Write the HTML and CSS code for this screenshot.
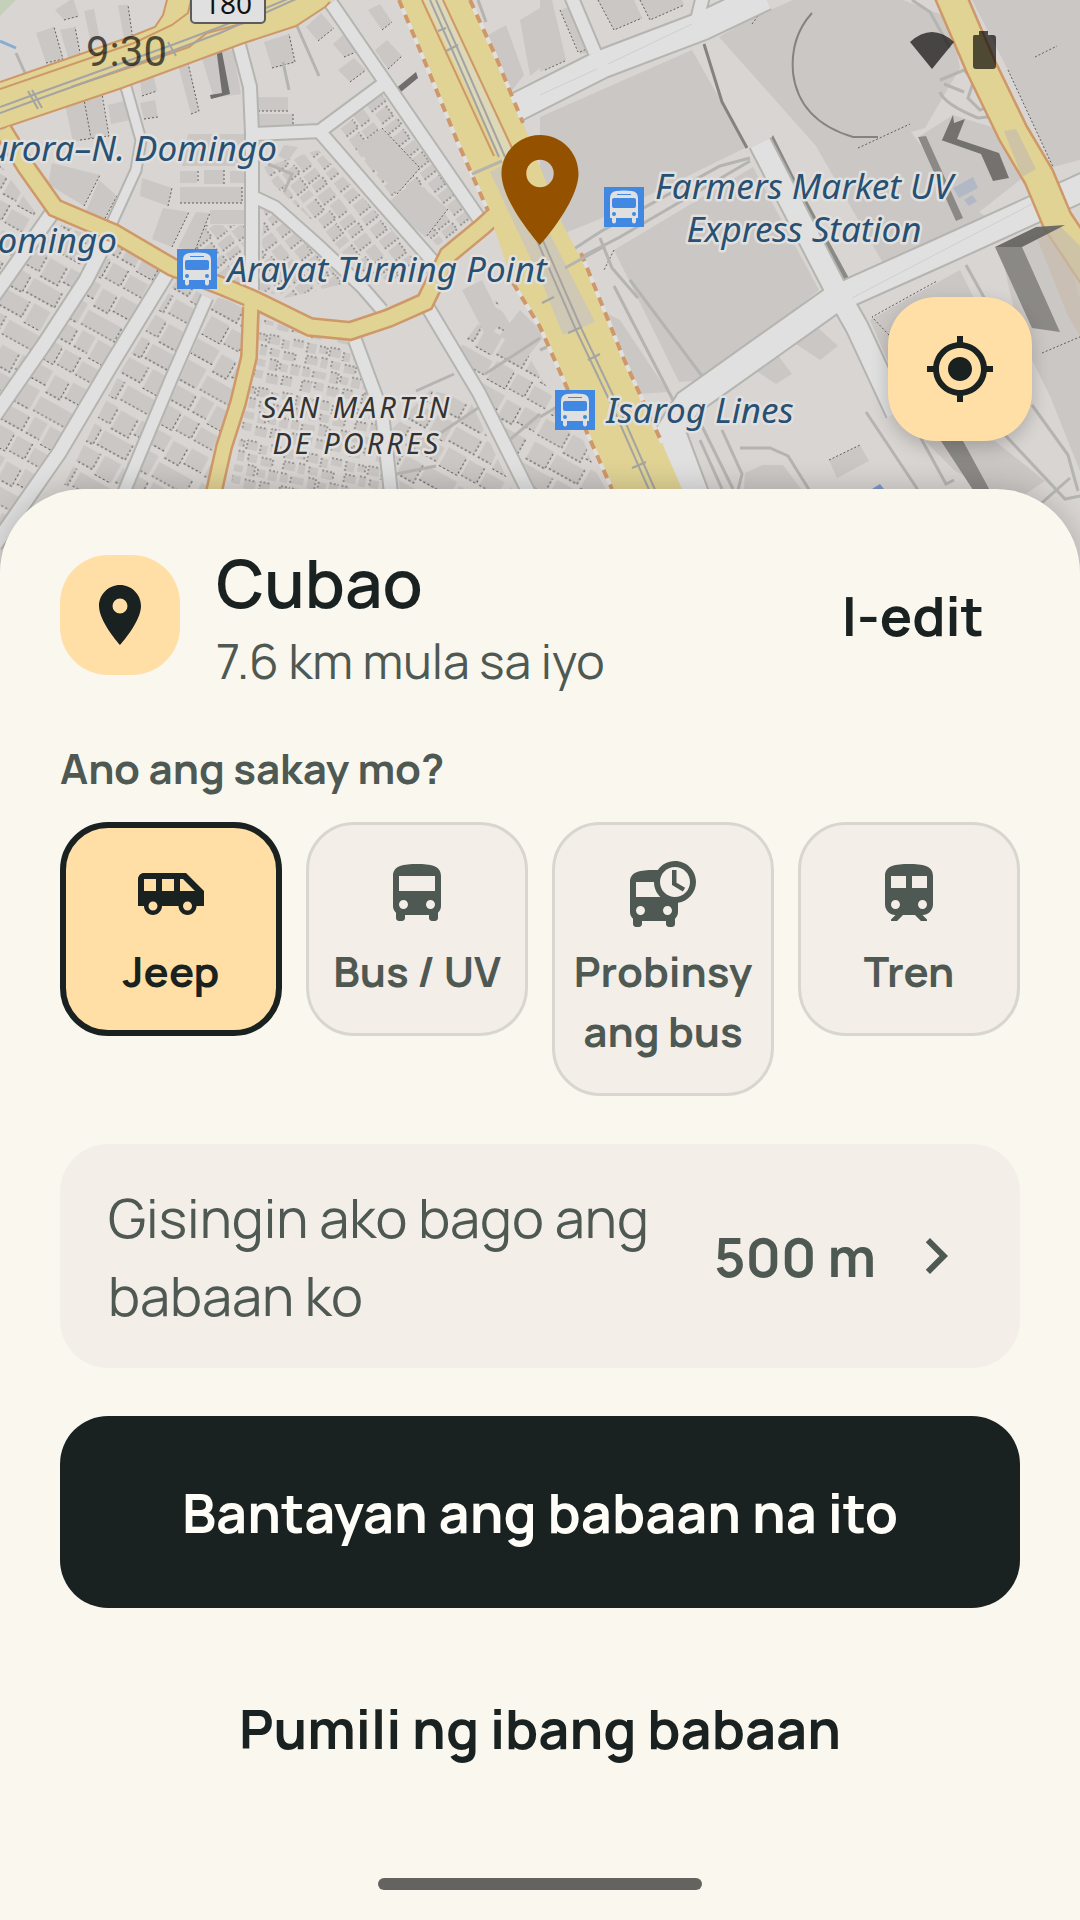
FILE: index.html
```html
<!DOCTYPE html>
<html lang="fil">
<head>
    <meta charset="UTF-8">
    <meta name="viewport" content="width=device-width, initial-scale=1.0">
    <title>Cubao</title>
    <link rel="stylesheet" href="styles.css">
</head>
<body>
    <div class="map">
        <svg class="map-canvas" viewBox="0 0 1080 573" preserveAspectRatio="xMidYMin slice" role="img" aria-label="Mapa ng Cubao">
            <defs>
                <!-- Rows of small houses -->
                <pattern id="houses" width="118" height="86" patternUnits="userSpaceOnUse" patternTransform="rotate(29) scale(1.15)">
                    <path class="house" d="M2 2h24v16H2zM29 3h17v18H29zM49 2h30v14H49zM82 4h14v17H82zM99 2h17v15H99zM3 24h19v17H3zM25 25h28v14H25zM57 22h20v19H57zM80 26h33v14H80zM2 45h30v15H2zM36 44h16v19H36zM55 46h25v14H55zM84 44h13v16H84zM100 45h16v18h-16zM4 66h16v17H4zM24 67h31v14H24zM58 65h18v18H58zM79 66h15v15H79zM97 68h18v13H97z"/>
                    <path class="house-edge" d="M2 18h24V2M29 21h17V3M49 16h30M82 21h14V4M99 17h17M3 41h19V24M25 39h28V25M57 41h20M80 40h33V26M2 60h30V45M36 63h16M55 60h25V46M84 60h13M100 63h16V45M4 83h16V66M24 81h31M58 83h18V65M79 81h15V66M97 81h18"/>
                </pattern>
                <pattern id="lots" width="74" height="58" patternUnits="userSpaceOnUse" patternTransform="rotate(-38)">
                    <path class="house" d="M2 2h14v11H2zM19 2h18v13H19zM40 3h12v14H40zM55 2h16v11H55zM2 17h19v10H2zM24 19h13v13H24zM41 21h15v10H41zM59 17h12v15H59zM3 31h14v12H3zM21 36h16v9H21zM40 35h13v12H40zM56 36h15v9H56zM2 47h16v8H2zM21 49h15v7H21zM40 50h13v7H40zM57 48h14v8H57z"/>
                    <path class="house-edge" d="M2 13h14V2M19 15h18M40 17h12V3M55 13h16M2 27h19V17M24 32h13M41 31h15V21M59 32h12M3 43h14V31M21 45h16M40 47h13V35M56 45h15M2 55h16V47M21 56h15M57 56h14V48"/>
                </pattern>
                <pattern id="shanties" width="62" height="54" patternUnits="userSpaceOnUse" patternTransform="rotate(12)">
                    <path class="house" d="M1 1h9v10H1zM13 2h8v7h-8zM24 1h11v9H24zM38 3h7v9h-7zM48 1h11v7H48zM2 14h12v8H2zM17 13h7v10h-7zM28 14h9v8h-9zM41 15h12v8H41zM1 26h8v9H1zM12 27h13v7H12zM29 25h8v11h-8zM40 27h8v8h-8zM51 26h9v10h-9zM3 39h10v11H3zM16 38h9v8h-9zM29 40h12v9H29zM45 39h10v9H45z"/>
                    <path class="house-edge" d="M1 1v10M13 2h8v7M24 10V1h11M38 3v9M48 1h11M2 22v-8h12M17 13h7M28 14v8M41 15h12v8M1 26h8M12 34v-7M29 25h8v11M40 27v8M51 26h9M3 50V39h10M16 38v8M29 40h12M45 48v-9h10"/>
                </pattern>
                <symbol id="bus-stop" viewBox="0 0 40 40">
                    <path fill="#4088e2" d="M0 0h40v40H0z"/>
                    <path fill="#e0e0e0" d="M6 11q0-6 6-7 8-1 16 0 6 1 6 7v20h-2v4q-2 3-4 0v-4H12v4q-2 3-4 0v-4H6z"/>
                    <rect fill="#4088e2" x="8" y="11" width="24" height="10" rx="2"/>
                    <path fill="#4088e2" d="M13 7h14v1H13z"/>
                    <circle fill="#4088e2" cx="10" cy="27" r="2"/>
                    <circle fill="#4088e2" cx="30" cy="27" r="2"/>
                </symbol>
            </defs>

            <rect class="land" width="1080" height="573"/>
            <path fill="#c5d0ba" d="M0 0h16L0 16z"/>
            <path fill="none" stroke="#86add0" stroke-width="3" d="M0 41l16 7"/>

            <!-- Dense blocks -->
            <path fill="url(#houses)" d="M0 165l45 60-45 62zM62 225l48 18-70 100-40 50V290zM116 240l54 26-60 104-75 130-35 50V420l60-90zM178 278l26 18-35 80-45 113H62l60-120zM216 297l34 10v50l-30 132H132l52-120z"/>
            <path fill="url(#houses)" d="M496 300l110 189h-70l-50-95-26-46zM430 390l40 10 42 89H400l-8-60zM568 400l34 89h-50l-20-60z"/>
            <path fill="url(#lots)" d="M318 150l70 75 40 48-62 10-40-50-52-48-10-18zM338 125l44-30 90 125-30 30-50-50zM264 205l40 38 42 40-60 15-26-8zM190 225h54v65l-30-10-30-14z"/>
            <path fill="url(#shanties)" d="M262 318l50 18 40 5 28 90 5 58H230l15-80z"/>

            <!-- Single buildings -->
            <path class="house" d="M55 10l18-12 6 18-15 4zM84 11l10-2 6 31-9 3zM36 33l18-6 9 32-17 4zM60 30l15-3 7 36-11 4zM118 5h10l5 35-8 4zM65 104l36-10 8 42-36 6zM108 105l20-5 2 20-19 4zM200 52l33-2 8 44-27 4zM178 65l10-2 11 48-8 3zM264 42l25-8 6 28-23 6zM306 27l15-14 13 15-16 13zM333 44l18-16 15 20-22 9zM368 10l12-6 12 18-10 8zM375 50l12-10 15 16-14 13zM338 70l16-12 12 12-16 12zM140 80l14-3 3 14-15 5zM140 103l15-3 3 17-14 2zM52 163l48 12-16 31-36-22zM99 180l18 16-14 26-18-8zM142 178l30 10-4 18-28-10zM188 134h62v32h-68zM180 171h17v12h-17zM204 170h20v14h-20zM230 171h18v12h-18zM180 187h62v16h-62zM163 208l26 4-17 35-20-8zM196 212l14 1-16 40-16-6zM210 210h34v14h-34zM258 97h30v14h-30zM259 114h34v14h-34zM284 145l14 2-10 14-10-5zM356 148l26-20 38 40-23 26zM385 205l30-24 33 28-22 28z"/>
            <path class="house-edge" d="M64 20l15-4M46 63l17-4-9-32M71 67l11-4-7-36M133 40l-5-35M142 96l15-5M144 119l14-2M80 140l29-4-7-42M83 94l8 44M191 114l8-3-11-48M272 68l23-6-6-28M318 41l16-13M344 57l22-9M382 30l10-8M388 69l14-13M350 82l16-12M84 206l16-31M103 222l14-26M168 206l4-18M198 171v12M224 170v14M248 171v12M180 203h62v-16M172 247l17-35M194 253l16-40M258 111h30M293 114v14M382 128l38 40-23 26M448 209l-22 28"/>
            <path fill="#6f6e6c" d="M216 47l6 5 8 42-19 5-1-4 12-2zM394 90l22-18 2 6-22 18z"/>

            <path class="house" d="M488 35l18-10 18 50-14 18zM520 20l20-12v60l-10 8zM540 0h12l14 60-26 12zM560 10l18-6 18 48-16 2zM598 0h36l8 18-28 12zM640 0h42l2 5-34 15zM540 117l152-67 30 53 25 44-147 72-60 24zM719 37l30-18 44-19h110l47 18 10 50-35 60-14 4 52 70 38 24-105 60-80-140zM920 136l33-21 80 25 2 28-66 52zM972 0h108v160l-27 7-45-97zM614 250l139-83 66 123-110 90-30 2zM600 310l20 10 48 72-30 2zM790 340l24-16 24 22-18 14zM752 368l22-18 18 24-16 10zM870 320l90-50 30 60-90 60zM1000 248l60-22 40 150-10 120-40-100-30-60zM745 473l18-8h20l30 40h-70zM829 460l31-15 9 16-32 17zM462 290l20-10 20 40-14 20zM500 335l20-25 25 25-20 25z"/>
            <path class="house" d="M925 441h70l50 40-30 20-60-30z"/>
            <circle class="house" cx="866" cy="68" r="72"/>
            <path fill="none" stroke="#858380" stroke-width="3" d="M704 44l18 58 25 46"/>
            <path fill="none" stroke="#858380" stroke-width="2" d="M812 13q-22 24-19 60 6 48 60 64h25"/>
            <path class="road-edge" stroke-dasharray="2 3" d="M858 148l52-24M752 24l12-16M614 250l-10 20M1035 57l22-11M580 52l18-8M545 70l20-9M560 10l18 42M598 0l16 30 28-12M640 0l10 20 34-15M922 370l-50-53 65-36M1042 353l40-17M829 460l31-15M1008 70l45 97"/>
            <path fill="#8a8986" d="M773 135l20 40 58 107-6 4-58-100-18-44zM918 137l8-1 37 82-7 3zM756 0h8l4 6-6 2z"/>
            <path fill="#73726f" d="M942 140l11-25 1 8 11-4-8 20 42 14 10 25-16 3-12-27-40-14z"/>
            <path fill="#b3b8c6" d="M953 188l20-11 5 11-19 10zM964 200l8-5 5 6-8 5z"/>
            <path fill="#8a8986" d="M995 247l27 0 38 85-28-4zM941 441h22l30 55h-16z"/>
            <path fill="#7f97cf" d="M872 489l8-5 4 5z"/>

            <!-- Footways and service lanes -->
            <path class="lane" d="M630 280l75 100 12 6M614 286l60 116M560 268l60-31 130-76M600 238l12 30 26 30M560 258l40-26 120-66 30-8M667 430l50-38 80-52 52-36M695 489l-28-55 28-22 38 77M700 440l22 49M722 430l20 44-10 40M740 448h30l18 8 30 48M866 412l60 90M900 400l46 84 8-4M1005 435l60 64 30-6M1032 405l36 50 10 36M1070 478l-34 30M940 80l24-10 10 10-6 18 12 12 16-6-20-36M964 92l-20-8M940 92q4 12 38 26l20-2M912 0l18 12 20 36M966 265l20 36M283 62l6 28M297 26l22 50M478 0l8 22M16 53l9 20M268 164l24 10-8 18M416 391l38-17M430 440l48-32M396 474l40-8M485 374l55-36M500 448l40-34M540 350l14-6M540 417l20-12"/>

            <!-- Minor streets -->
            <g class="street-case">
                <path d="M239 45l11 42 2 46v157" stroke-width="16"/>
                <path d="M126 87l15 53-5 30-26 57" stroke-width="13"/>
                <path d="M252 134l68-3 62-46" stroke-width="16"/>
                <path d="M331 3l48 70 48 70 55 80" stroke-width="16"/>
                <path d="M320 132l59 68 58 66" stroke-width="16"/>
                <path d="M254 197l21 10 45 40 42 40 20 23" stroke-width="15"/>
                <path d="M52 213L7 277l-20 28M110 233l-24 47-41 63-50 72M169 270l-55 90-55 93-64 92" stroke-width="17"/>
                <path d="M207 297l-35 80-48 115" stroke-width="15"/>
                <path d="M355 340l27 73 9 80M427 306l52 87 50 100" stroke-width="16"/>
                <path d="M515 108l87-44 100-38L765-4" stroke-width="31"/>
                <path d="M595 53L571-4M697 20l6-24" stroke-width="16"/>
                <path d="M760 143l76 147 21 37 40 86" stroke-width="25"/>
                <path d="M1090 184L936 254l-103 46-145 103-17 27 24 64" stroke-width="30"/>
            </g>
            <g class="street">
                <path d="M239 45l11 42 2 46v157" stroke-width="12"/>
                <path d="M126 87l15 53-5 30-26 57" stroke-width="9"/>
                <path d="M252 134l68-3 62-46" stroke-width="12"/>
                <path d="M331 3l48 70 48 70 55 80" stroke-width="12"/>
                <path d="M320 132l59 68 58 66" stroke-width="12"/>
                <path d="M254 197l21 10 45 40 42 40 20 23" stroke-width="11"/>
                <path d="M52 213L7 277l-20 28M110 233l-24 47-41 63-50 72M169 270l-55 90-55 93-64 92" stroke-width="13"/>
                <path d="M207 297l-35 80-48 115" stroke-width="11"/>
                <path d="M355 340l27 73 9 80M427 306l52 87 50 100" stroke-width="12"/>
                <path d="M515 108l87-44 100-38L765-4" stroke-width="27"/>
                <path d="M595 53L571-4M697 20l6-24" stroke-width="12"/>
                <path d="M760 143l76 147 21 37 40 86" stroke-width="21"/>
                <path d="M1090 184L936 254l-103 46-145 103-17 27 24 64" stroke-width="26"/>
            </g>
            <path fill="none" stroke="#cfcfcf" d="M608 64l84-40M540 95l57-26M852 298l180-94"/>

            <!-- Main roads -->
            <g class="main-case">
                <path d="M3 130l23 37 29 41 59 25 58 34 52 20 31 13 55 27 40 4 39-13 36-16 23-47 34-28 20-18" stroke-width="20"/>
                <path d="M251 307l-2 50-11 46-14 44-18 80" stroke-width="18"/>
                <path d="M948-10l33 77 32 66 26 44 18 43 40 60" stroke-width="33"/>
            </g>
            <path class="main-fill" d="M0 82l127-44 28-11 8-12 4-15h165l-7 7-29 19-52 17-122 45L0 129z"/>
            <path class="main-line" d="M0 82l127-44 28-11 8-12 4-15M0 89l134-46 38-18 16-12 3-13M71 87l60-20 58-20 18-14 45-12M330 2l-5 5-29 19-52 17-122 45L0 129"/>
            <path class="main-fill" d="M399 0h71l26 57 27 66 39 100 30 57 31 77 39 86 20 46h-70l-44-99-31-73-24-34-24-70-31-70-31-76z"/>
            <path class="main-line dash-back" d="M399 0l28 67 31 76 31 70M513 283l27 44 28 63 44 99M470 0l26 57 27 66M581 253l11 27 31 77 39 86"/>
            <path class="main-line dashed" d="M399 0l28 67 31 76 31 70M513 283l27 44 28 63 44 99M470 0l26 57 27 66M581 253l11 27 31 77 39 86"/>
            <g class="main">
                <path d="M3 130l23 37 29 41 59 25 58 34 52 20 31 13 55 27 40 4 39-13 36-16 23-47 34-28 20-18" stroke-width="15"/>
                <path d="M251 300l-2 57-11 46-14 44-18 80" stroke-width="13"/>
                <path d="M948-10l33 77 32 66 26 44 18 43 40 60" stroke-width="28"/>
            </g>
            <path fill="#ddd8b8" d="M424 0h18l66 143 14 30h-14z"/>
            <path class="main-line" d="M422 0l72 156M443 0l70 150"/>
            <path fill="#cdc6b8" d="M490 172l22-12 83 162-32 13-20-50z" opacity=".9"/>
            <path class="rail" d="M0 107l33-12 139-50 48-18L290-2M0 113l33-12 139-50 48-18L296-1M430 0l20 45 49 112M436 0l20 45 49 112M528 220l48 110 38 80 36 82M534 220l48 110 38 80 36 82M28 91l10 18M32 90l10 18M168 42l8 14M446 28l-8 3M458 45l-12 6M588 360l12-6M632 468l14-6M542 303l12-6M568 333l14-6"/>
            <path class="lane" d="M472 174l30-13M565 268l40-22"/>
            <path fill="#c8bcae" opacity=".7" d="M1004 131l12-2 20 40-14 8zM1036 236l24-10 20 20v90l-12-20z"/>
            <path fill="#62605d" opacity=".9" d="M995 247l41-20 29-2-43 22z"/>

            <rect x="191" y="-20" width="74" height="43" rx="4" fill="#e0e0e0" stroke="#5c5c5c" stroke-width="2"/>
            <text class="route" x="228" y="14">180</text>

            <use href="#bus-stop" x="177" y="249" width="40" height="40"/>
            <use href="#bus-stop" x="604" y="187" width="40" height="40"/>
            <use href="#bus-stop" x="555" y="390" width="40" height="40"/>
            <g class="stop-name">
                <text x="277" y="161" text-anchor="end">Aurora–N. Domingo</text>
                <text x="117" y="253" text-anchor="end">Domingo</text>
                <text x="387" y="282" text-anchor="middle">Arayat Turning Point</text>
                <text x="804" y="199" text-anchor="middle">Farmers Market UV</text>
                <text x="804" y="242" text-anchor="middle">Express Station</text>
                <text x="700" y="423" text-anchor="middle">Isarog Lines</text>
            </g>
            <g class="district">
                <text x="357" y="418">SAN MARTIN</text>
                <text x="357" y="454">DE PORRES</text>
            </g>

            <path fill="#945200" transform="translate(474 124) scale(5.5)" d="M12 2C8.13 2 5 5.13 5 9c0 5.25 7 13 7 13s7-7.75 7-13c0-3.87-3.13-7-7-7zm0 9.500a2.500 2.500 0 0 1 0-5 2.500 2.500 0 0 1 0 5z"/>
        </svg>

        <div class="status-bar">
            <span>9:30</span>
            <svg width="88" height="42" viewBox="0 0 88 42" aria-hidden="true">
                <path d="M0 11Q22-9 44 11L22 38zM64 4h5V0h9v4h5q3 0 3 3v28q0 3-3 3H66q-3 0-3-3V7q0-3 1-3z"/>
            </svg>
        </div>

        <button class="locate" type="button" aria-label="Kasalukuyang lokasyon">
            <svg class="icon" viewBox="0 0 24 24"><path d="M12 8c-2.210 0-4 1.790-4 4s1.790 4 4 4 4-1.790 4-4-1.790-4-4-4zm8.940 3A8.994 8.994 0 0 0 13 3.060V1h-2v2.060A8.994 8.994 0 0 0 3.060 11H1v2h2.060A8.994 8.994 0 0 0 11 20.940V23h2v-2.060A8.994 8.994 0 0 0 20.940 13H23v-2h-2.060zM12 19c-3.870 0-7-3.130-7-7s3.130-7 7-7 7 3.130 7 7-3.130 7-7 7z"/></svg>
        </button>
    </div>

    <main class="sheet">
        <div class="place">
            <div class="place-icon">
                <svg class="icon" viewBox="0 0 24 24" aria-hidden="true"><path d="M12 2C8.130 2 5 5.130 5 9c0 5.250 7 13 7 13s7-7.750 7-13c0-3.870-3.130-7-7-7zm0 9.500a2.500 2.500 0 0 1 0-5 2.500 2.500 0 0 1 0 5z"/></svg>
            </div>
            <div class="place-text">
                <h1>Cubao</h1>
                <p>7.6 km mula sa iyo</p>
            </div>
            <button class="edit" type="button">I-edit</button>
        </div>

        <h2 id="rideLabel">Ano ang sakay mo?</h2>
        <div class="rides" role="radiogroup" aria-labelledby="rideLabel">
            <label class="ride">
                <input type="radio" name="ride" value="jeep" checked>
                <svg class="icon" viewBox="0 0 24 24" aria-hidden="true"><path d="M17 5H3c-1.100 0-2 .890-2 2v9h2c0 1.650 1.340 3 3 3s3-1.350 3-3h5.500c0 1.650 1.340 3 3 3s3-1.350 3-3H23v-5l-6-6zM3 11V7h4v4H3zm3 6.500c-.830 0-1.500-.670-1.500-1.500s.670-1.500 1.500-1.500 1.500.670 1.500 1.500-.670 1.500-1.500 1.500zm7-6.500H9V7h4v4zm4.500 6.500c-.830 0-1.500-.670-1.500-1.500s.670-1.500 1.500-1.500 1.500.670 1.500 1.500-.670 1.500-1.500 1.500zM15 11V7h1l4 4h-5z"/></svg>
                <span>Jeep</span>
            </label>
            <label class="ride">
                <input type="radio" name="ride" value="bus">
                <svg class="icon" viewBox="0 0 24 24" aria-hidden="true"><path d="M4 16c0 .880.390 1.670 1 2.220V20c0 .550.450 1 1 1h1c.550 0 1-.450 1-1v-1h8v1c0 .550.450 1 1 1h1c.550 0 1-.450 1-1v-1.780c.610-.550 1-1.340 1-2.220V6c0-3.500-3.580-4-8-4s-8 .500-8 4v10zm3.500 1c-.830 0-1.500-.670-1.500-1.500S6.670 14 7.500 14s1.500.670 1.500 1.500S8.330 17 7.500 17zm9 0c-.830 0-1.500-.670-1.500-1.500s.670-1.500 1.500-1.500 1.500.670 1.500 1.500-.670 1.500-1.500 1.500zm1.500-6H6V6h12v5z"/></svg>
                <span>Bus / UV</span>
            </label>
            <label class="ride">
                <input type="radio" name="ride" value="province">
                <svg class="icon" viewBox="0 0 24 24" aria-hidden="true"><path d="M16 1c-2.400 0-4.520 1.210-5.780 3.050.010-.010.010-.020.020-.030C9.840 4 9.420 4 9 4c-4.420 0-8 .500-8 4v10c0 .880.390 1.670 1 2.220V22c0 .550.450 1 1 1h1c.550 0 1-.450 1-1v-1h8v1c0 .550.450 1 1 1h1c.550 0 1-.450 1-1v-1.780c.610-.550 1-1.340 1-2.220v-3.080c3.390-.490 6-3.390 6-6.920 0-3.870-3.130-7-7-7zM4.500 19c-.830 0-1.500-.670-1.500-1.500S3.670 16 4.500 16s1.500.670 1.500 1.500S5.330 19 4.500 19zM3 13V8h6c0 1.960.810 3.730 2.110 5H3zm10.500 6c-.830 0-1.500-.670-1.500-1.500s.670-1.500 1.500-1.500 1.500.670 1.500 1.500-.670 1.500-1.500 1.500zm2.500-6c-2.760 0-5-2.240-5-5s2.240-5 5-5 5 2.240 5 5-2.240 5-5 5zm.5-9H15v5l3.620 2.160.750-1.230-2.870-1.680V4z"/></svg>
                <span>Probinsy<wbr>ang bus</span>
            </label>
            <label class="ride">
                <input type="radio" name="ride" value="train">
                <svg class="icon" viewBox="0 0 24 24" aria-hidden="true"><path d="M12 2c-4.420 0-8 .500-8 4v9.500C4 17.430 5.570 19 7.500 19L6 20.500v.500h2l2-2h4l2 2h2v-.500L16.500 19c1.930 0 3.500-1.570 3.500-3.500V6c0-3.500-3.580-4-8-4zM7.500 17c-.830 0-1.500-.670-1.500-1.500S6.670 14 7.500 14s1.500.670 1.500 1.500S8.330 17 7.500 17zm3.500-7H6V6h5v4zm5.500 7c-.830 0-1.500-.670-1.500-1.500s.670-1.500 1.500-1.500 1.500.670 1.500 1.500-.670 1.500-1.500 1.500zm1.500-7h-5V6h5v4z"/></svg>
                <span>Tren</span>
            </label>
        </div>

        <button class="distance" type="button">
            <span class="distance-label">Gisingin ako bago ang babaan ko</span>
            <strong>500 m</strong>
            <svg class="icon" viewBox="0 0 24 24" aria-hidden="true"><path d="M10 6 8.590 7.410 13.170 12l-4.580 4.590L10 18l6-6z"/></svg>
        </button>

        <button class="primary" type="button">Bantayan ang babaan na ito</button>
        <button class="secondary" type="button">Pumili ng ibang babaan</button>

        <div class="home-bar"></div>
    </main>
</body>
</html>
```
FILE: styles.css
```css
* {
    box-sizing: border-box;
}

body {
    font-family: 'Manrope', 'Inter', sans-serif;
    background-color: #faf7ef;
    color: #192220;
    margin: 0;
    min-height: 100vh;
    display: flex;
    flex-direction: column;
}

button {
    font: inherit;
    color: inherit;
    background: none;
    border: none;
    padding: 0;
    cursor: pointer;
}

.icon {
    width: 72px;
    height: 72px;
    flex: none;
    fill: currentColor;
}

/* Map */
.map {
    position: relative;
    height: 573px;
}

.map-canvas {
    display: block;
    width: 100%;
    height: 100%;
}

.land {
    fill: #d9d5d2;
}

.house {
    fill: #cbc7c4;
}

.house-edge,
.road-edge {
    fill: none;
    stroke: #5f5d5b;
    stroke-dasharray: 2 2;
}

.lane {
    fill: none;
    stroke: #b4b4b0;
    stroke-width: 3;
}

.street-case {
    fill: none;
    stroke: #b4b4b0;
}

.street {
    fill: none;
    stroke: #e0e0e0;
}

.main-case {
    fill: none;
    stroke: #cf9868;
}

.main {
    fill: none;
    stroke: #e0d394;
}

.main-fill {
    fill: #e0d394;
}

.main-line {
    fill: none;
    stroke: #cf9868;
    stroke-width: 2;
}

.main-line.dash-back {
    stroke: #e0e0e0;
    stroke-width: 4;
}

.main-line.dashed {
    stroke-width: 4;
    stroke-dasharray: 9 7;
}

.rail {
    fill: none;
    stroke: #a4a4a4;
    stroke-width: 2;
}

.stop-name,
.district {
    font-family: 'Noto Sans', sans-serif;
    font-style: italic;
    paint-order: stroke;
    stroke: #e2e0de;
    stroke-width: 5px;
    stroke-linejoin: round;
}

.stop-name {
    font-size: 35px;
    fill: #285072;
}

.district {
    font-size: 29px;
    letter-spacing: 3px;
    text-anchor: middle;
    fill: #333;
}

.route {
    font-family: 'Noto Sans', sans-serif;
    font-size: 28px;
    text-anchor: middle;
    fill: #111;
}

.status-bar {
    position: absolute;
    inset: 0 0 auto;
    display: flex;
    justify-content: space-between;
    align-items: center;
    padding: 31px 82px 0 86px;
    font-family: 'Roboto', sans-serif;
    font-size: 42px;
    line-height: 42px;
    opacity: 0.65;
    color: #000;
    fill: #000;
}

.locate {
    position: absolute;
    right: 48px;
    bottom: 132px;
    display: flex;
    align-items: center;
    justify-content: center;
    width: 144px;
    height: 144px;
    border-radius: 48px;
    background-color: #ffdfa6;
    box-shadow: 0 6px 18px rgba(0, 0, 0, 0.2);
}

/* Bottom sheet */
.sheet {
    position: relative;
    flex: 1;
    display: flex;
    flex-direction: column;
    margin-top: -84px;
    padding: 48px 60px 30px;
    border-radius: 84px 84px 0 0;
    background-color: #faf7ef;
    box-shadow: 0 0 30px rgba(0, 0, 0, 0.2);
}

.place {
    display: flex;
    align-items: center;
    gap: 36px;
}

.place-icon {
    display: flex;
    align-items: center;
    justify-content: center;
    width: 120px;
    height: 120px;
    border-radius: 48px;
    background-color: #ffdfa6;
}

.place-text {
    flex: 1;
}

h1 {
    margin: 0;
    font-size: 66px;
    line-height: 92px;
    font-weight: 600;
}

.place-text p {
    margin: 0;
    font-size: 48px;
    line-height: 64px;
    font-weight: 400;
    color: #4e5953;
}

.edit {
    padding: 36px;
    font-size: 54px;
    font-weight: 700;
}

h2 {
    margin: 45px 0 24px;
    font-size: 42px;
    line-height: 60px;
    font-weight: 700;
    color: #4e5953;
}

.rides {
    display: grid;
    grid-template-columns: repeat(4, 1fr);
    align-items: start;
    gap: 24px;
}

.ride {
    display: flex;
    flex-direction: column;
    align-items: center;
    gap: 11px;
    padding: 33px 12px 32px;
    border: 3px solid #d9d6cf;
    border-radius: 48px;
    background-color: #f3eee7;
    color: #4e5953;
    font-size: 42px;
    line-height: 60px;
    font-weight: 700;
    text-align: center;
    cursor: pointer;
}

.ride input {
    position: absolute;
    opacity: 0;
}

.ride:has(input:checked) {
    padding: 30px 9px 29px;
    border: 6px solid #192220;
    background-color: #ffdfa6;
    color: #192220;
}

.distance {
    display: flex;
    align-items: center;
    margin-top: 48px;
    padding: 34px 48px;
    border-radius: 48px;
    background-color: #f3eee7;
    color: #4e5953;
    font-size: 54px;
    line-height: 78px;
}

.distance-label {
    flex: 1;
    font-weight: 400;
    text-align: left;
}

.distance strong {
    font-weight: 700;
}

.distance .icon {
    margin-left: 24px;
}

.primary,
.secondary {
    font-size: 54px;
    line-height: 78px;
    font-weight: 700;
}

.primary {
    margin-top: 48px;
    padding: 57px 48px;
    border-radius: 48px;
    background-color: #192220;
    color: #fffdf8;
}

.secondary {
    margin-top: 24px;
    padding: 57px 48px;
}

.home-bar {
    width: 324px;
    height: 12px;
    margin: auto auto 0;
    border-radius: 6px;
    background-color: #65635f;
}
```
